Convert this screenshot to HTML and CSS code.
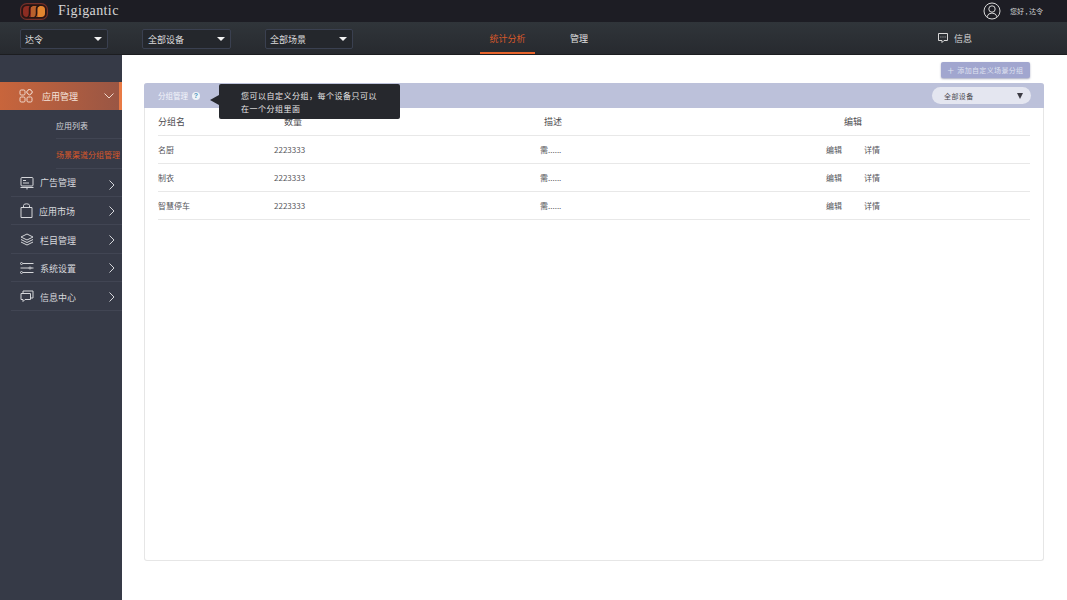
FILE: index.html
```html
<!DOCTYPE html>
<html lang="zh-CN">
<head>
<meta charset="utf-8">
<title>Figigantic</title>
<link rel="stylesheet" href="styles.css">
</head>
<body>
<header class="topbar">
  <div class="brand">
    <svg class="logo" width="28" height="17" viewBox="0 0 28 17">
      <rect x="0.6" y="0.6" width="26.8" height="15.8" rx="6" fill="#2a1614" stroke="#74302a" stroke-width="1.2"/>
      <rect x="3" y="3" width="22" height="11" rx="4" fill="#8c2c22"/>
      <rect x="11" y="3" width="7" height="11" fill="#b9602c"/>
      <path d="M18 3 H21 Q25 3 25 7 V10 Q25 14 21 14 H18Z" fill="#e2862f"/>
      <path d="M12.5 2.5 Q9.5 3 9.5 6 V10.5 Q9.5 13.5 7.5 14.5 M19.5 2.5 Q16.5 3 16.5 6 V10.5 Q16.5 13.5 14.5 14.5" fill="none" stroke="#241412" stroke-width="1.5"/>
    </svg>
    <span class="brand-name">Figigantic</span>
  </div>
  <div class="user">
    <svg width="18" height="18" viewBox="0 0 18 18" fill="none" stroke="#d8d8d8" stroke-width="1">
      <circle cx="9" cy="9" r="8"/>
      <circle cx="9" cy="7" r="3.2"/>
      <path d="M3.8 15 Q5 11 9 11 Q13 11 14.2 15"/>
    </svg>
    <span class="user-name">您好 , 达令</span>
  </div>
</header>

<nav class="subbar">
  <div class="selects">
    <div class="top-select"><span>达令</span><i class="caret"></i></div>
    <div class="top-select"><span>全部设备</span><i class="caret"></i></div>
    <div class="top-select"><span>全部场景</span><i class="caret"></i></div>
  </div>
  <div class="tabs">
    <a class="tab tab-active">统计分析</a>
    <a class="tab">管理</a>
  </div>
  <div class="info">
    <svg width="12" height="12" viewBox="0 0 12 12" fill="none" stroke="#d8d8d8" stroke-width="1">
      <path d="M1.5 1.5 H10.5 V8.5 H7 L5 10.5 V8.5 H1.5Z"/>
      <path d="M3.5 5 H4.3 M5.6 5 H6.4 M7.7 5 H8.5"/>
    </svg>
    <span>信息</span>
  </div>
</nav>

<div class="body">
  <aside class="sidebar">
    <div class="menu-item menu-active">
      <svg class="mi" width="14" height="14" viewBox="0 0 14 14" fill="none" stroke="#f0d8cc" stroke-width="1">
        <rect x="1" y="1" width="5" height="5" rx="1.2"/>
        <rect x="8.2" y="0.8" width="4.6" height="4.6" rx="1.2" transform="rotate(45 10.5 3.1)"/>
        <rect x="1" y="8" width="5" height="5" rx="1.2"/>
        <rect x="8" y="8" width="5" height="5" rx="1.2"/>
      </svg>
      <span class="ml">应用管理</span>
      <svg class="chev-down" width="10" height="6" viewBox="0 0 10 6" fill="none" stroke="#f0d8cc"><path d="M0.5 0.5 L5 5 L9.5 0.5"/></svg>
    </div>
    <div class="sub-item">应用列表</div>
    <div class="sub-item sub-active">场景渠道分组管理</div>

    <div class="menu-item item-ad">
      <svg class="mi" width="14" height="14" viewBox="0 0 14 14" fill="none" stroke="#d5d6da"><rect x="1" y="1.5" width="12" height="8.5" rx="1"/><path d="M3 4.5 H6 M3 7 H9 M0.5 11.5 H13.5 M7 11.5 V13.5"/></svg>
      <span class="ml ml-high">广告管理</span>
      <svg class="chev" width="6" height="10" viewBox="0 0 6 10" fill="none" stroke="#d5d6da"><path d="M0.5 0.5 L5 5 L0.5 9.5"/></svg>
    </div>
    <div class="menu-item item-up">
      <svg class="mi" width="13" height="15" viewBox="0 0 13 15" fill="none" stroke="#d5d6da"><path d="M1 4.5 H12 V14.5 H1Z M3.5 4.5 V2.5 Q3.5 0.8 6.5 0.8 Q9.5 0.8 9.5 2.5 V4.5"/></svg>
      <span class="ml">应用市场</span>
      <svg class="chev" width="6" height="10" viewBox="0 0 6 10" fill="none" stroke="#d5d6da"><path d="M0.5 0.5 L5 5 L0.5 9.5"/></svg>
    </div>
    <div class="menu-item item-tall">
      <svg class="mi" width="14" height="13" viewBox="0 0 14 13" fill="none" stroke="#d5d6da"><path d="M7 1 L13 4 L7 7 L1 4Z M1 6.5 L7 9.5 L13 6.5 M1 9 L7 12 L13 9"/></svg>
      <span class="ml">栏目管理</span>
      <svg class="chev" width="6" height="10" viewBox="0 0 6 10" fill="none" stroke="#d5d6da"><path d="M0.5 0.5 L5 5 L0.5 9.5"/></svg>
    </div>
    <div class="menu-item item-up">
      <svg class="mi" width="14" height="12" viewBox="0 0 14 12" fill="none" stroke="#d5d6da"><path d="M3 1.5 H13.5 M0.5 6 H9 M11 6 H13.5 M3 10.5 H13.5"/><circle cx="1.5" cy="1.5" r="1"/><circle cx="10" cy="6" r="1"/><circle cx="1.5" cy="10.5" r="1"/></svg>
      <span class="ml">系统设置</span>
      <svg class="chev" width="6" height="10" viewBox="0 0 6 10" fill="none" stroke="#d5d6da"><path d="M0.5 0.5 L5 5 L0.5 9.5"/></svg>
    </div>
    <div class="menu-item item-tall">
      <svg class="mi" width="14" height="13" viewBox="0 0 14 13" fill="none" stroke="#d5d6da"><path d="M1 3.5 H10.5 V9.5 H5 L3 11.5 V9.5 H1Z M3 3.5 V1 H13 V8 H10.5"/></svg>
      <span class="ml">信息中心</span>
      <svg class="chev" width="6" height="10" viewBox="0 0 6 10" fill="none" stroke="#d5d6da"><path d="M0.5 0.5 L5 5 L0.5 9.5"/></svg>
    </div>
  </aside>

  <main class="main">
    <div class="actions">
      <button class="add-btn"><span class="plus">+</span>添加自定义场景分组</button>
    </div>
    <section class="panel">
      <div class="panel-head">
        <div class="panel-title">
          <span>分组管理</span>
          <span class="help">?</span>
        </div>
        <div class="panel-select"><span>全部设备</span><i class="caret-dark"></i></div>
        <div class="tooltip">您可以自定义分组，每个设备只可以<br>在一个分组里面</div>
      </div>
      <div class="table">
        <div class="row row-head">
          <div class="c-name">分组名</div>
          <div class="c-count head-count">数量</div>
          <div class="c-desc head-desc">描述</div>
          <div class="c-edit head-edit">编辑</div>
        </div>
        <div class="row">
          <div class="c-name">名厨</div>
          <div class="c-count">2223333</div>
          <div class="c-desc">需......</div>
          <div class="c-edit ops"><span>编辑</span><span>详情</span></div>
        </div>
        <div class="row">
          <div class="c-name">制衣</div>
          <div class="c-count">2223333</div>
          <div class="c-desc">需......</div>
          <div class="c-edit ops"><span>编辑</span><span>详情</span></div>
        </div>
        <div class="row">
          <div class="c-name">智慧停车</div>
          <div class="c-count">2223333</div>
          <div class="c-desc">需......</div>
          <div class="c-edit ops"><span>编辑</span><span>详情</span></div>
        </div>
      </div>
    </section>
  </main>
</div>
</body>
</html>
```

FILE: styles.css
```css
* { box-sizing: border-box; }
html, body { margin: 0; height: 100%; }
body {
  width: 1067px;
  height: 600px;
  overflow: hidden;
  display: flex;
  flex-direction: column;
  background: #fff;
  font-family: "Noto Sans CJK SC", "Noto Sans", sans-serif;
}

.topbar {
  height: 22px;
  flex: none;
  background: #1d1d24;
  display: flex;
  align-items: center;
  justify-content: space-between;
  padding: 0 24px 0 20px;
}
.brand { display: flex; align-items: center; gap: 10px; }
.logo { display: block; }
.brand-name {
  font-family: "Liberation Serif", serif;
  font-size: 14px;
  letter-spacing: 0.4px;
  color: #d6d6d6;
}
.user { display: flex; align-items: center; gap: 9px; }
.user-name { font-size: 7px; color: #d4d4d4; }

.subbar {
  height: 33px;
  flex: none;
  background: linear-gradient(#30353a, #272a2f);
  border-bottom: 1px solid #1c1d20;
  display: flex;
  align-items: flex-start;
  padding-left: 20px;
}
.selects { display: flex; gap: 34px; padding-top: 7px; width: 460px; }
.top-select {
  width: 88px;
  height: 20px;
  border: 1px solid #3a4050;
  border-radius: 2px;
  background: #24272c;
  color: #dcdcdc;
  font-size: 9px;
  display: flex;
  align-items: center;
  justify-content: space-between;
  padding: 0 4px 0 4px;
}
.top-select:nth-child(2) { width: 89px; padding-left: 5px; }
.caret {
  width: 0;
  height: 0;
  border-left: 4px solid transparent;
  border-right: 4px solid transparent;
  border-top: 4px solid #f2f2f2;
  margin-right: 1px;
}
.tabs { display: flex; height: 32px; }
.tab {
  width: 55px;
  height: 32px;
  font-size: 9px;
  line-height: 33px;
  text-align: center;
  color: #e0e0e0;
}
.tab + .tab { margin-left: 29px; width: 30px; }
.tab-active { color: #d8582a; border-bottom: 2px solid #e8642c; }
.info {
  margin-left: 343px;
  display: flex;
  align-items: center;
  gap: 5px;
  height: 32px;
  font-size: 9px;
  color: #d8d8d8;
}

.body { flex: 1; display: flex; min-height: 0; }
.sidebar {
  width: 122px;
  flex: none;
  background: #363a47;
  padding-top: 27px;
}
.menu-item {
  display: flex;
  align-items: center;
  height: 28px;
  margin-left: 11px;
  padding-left: 9px;
  border-bottom: 1px solid #414553;
  color: #d8d9dd;
  font-size: 9px;
  position: relative;
}
.item-tall { height: 29px; }
.mi { flex: none; }
.ml { margin-left: 6px; padding-top: 2px; }
.ml-high { padding-top: 0; }
.chev { position: absolute; right: 7px; top: 10px; }
.item-ad .chev { top: 11px; }
.item-up .chev { top: 9px; }
.menu-active {
  margin-left: 0;
  padding-left: 19px;
  height: 28px;
  border-bottom: 0;
  border-right: 3px solid #e87a45;
  background: linear-gradient(90deg, #c8653c, #995644);
  color: #f5e4dc;
}
.menu-active .ml { margin-left: 9px; padding-top: 0; }
.chev-down { position: absolute; right: 5px; top: 11px; }
.sub-item {
  height: 30px;
  margin-left: 56px;
  font-size: 8px;
  line-height: 31px;
  color: #d4d5da;
  white-space: nowrap;
  border-bottom: 1px solid #414553;
}
.sub-item:nth-child(2) { height: 29px; line-height: 31px; }
.sub-active { color: #d8582a; }

.main { flex: 1; padding: 0 23px 39px 22px; display: flex; flex-direction: column; min-width: 0; }
.actions { height: 28px; display: flex; justify-content: flex-end; padding: 7px 14px 0 0; }
.add-btn {
  width: 89px;
  height: 16px;
  border: 0;
  border-radius: 2px;
  background: #a1a6cf;
  box-shadow: 0 1px 2px rgba(80, 85, 130, 0.5);
  color: #dfe1f0;
  font-family: inherit;
  font-size: 7px;
  letter-spacing: 0.35px;
  padding: 0;
  display: flex;
  align-items: center;
  justify-content: center;
  white-space: nowrap;
}
.plus { font-size: 12px; line-height: 14px; margin-right: 3px; font-weight: 300; }

.panel {
  flex: 1;
  border: 1px solid #e6e6e6;
  border-top: 0;
  border-radius: 3px;
}
.panel-head {
  position: relative;
  height: 25px;
  margin: 0 -1px;
  border-radius: 3px 3px 0 0;
  background: #bcc1da;
  display: flex;
  align-items: center;
  justify-content: space-between;
  padding: 0 13px 0 14px;
}
.panel-title { display: flex; align-items: center; gap: 4px; font-size: 7.5px; color: #f3f4fa; }
.help {
  width: 8px;
  height: 8px;
  border-radius: 50%;
  background: #eef3f8;
  color: #4f93bd;
  font-family: "Liberation Sans", sans-serif;
  font-size: 7px;
  font-weight: 700;
  line-height: 8px;
  text-align: center;
}
.panel-select {
  width: 99px;
  height: 17px;
  border-radius: 9px;
  background: #e4e6f0;
  font-size: 7px;
  letter-spacing: 0.4px;
  color: #4a4a50;
  display: flex;
  align-items: center;
  justify-content: space-between;
  padding: 0 8px 0 12px;
}
.caret-dark {
  width: 0;
  height: 0;
  border-left: 3px solid transparent;
  border-right: 3px solid transparent;
  border-top: 6px solid #3c3c44;
}
.tooltip {
  position: absolute;
  left: 75px;
  top: 1px;
  width: 181px;
  height: 35px;
  padding: 5px 0 0 22px;
  background: #26282d;
  border-radius: 2px;
  color: #e6e6e6;
  font-size: 8px;
  letter-spacing: 0.5px;
  line-height: 13.4px;
}
.tooltip::before {
  content: "";
  position: absolute;
  left: -9px;
  top: 11px;
  border-top: 5px solid transparent;
  border-bottom: 5px solid transparent;
  border-right: 9px solid #26282d;
}

.table { padding: 0 13px; }
.row {
  display: grid;
  grid-template-columns: 116px 266px 286px 1fr;
  height: 28px;
  align-items: center;
  border-bottom: 1px solid #e8e8e8;
  font-size: 8px;
  color: #55555a;
}
.row-head { font-size: 9px; color: #4c4c50; }
.head-count { padding-left: 10px; }
.head-desc { padding-left: 4px; }
.head-edit { padding-left: 18px; }
.ops { display: flex; gap: 22px; }
```
